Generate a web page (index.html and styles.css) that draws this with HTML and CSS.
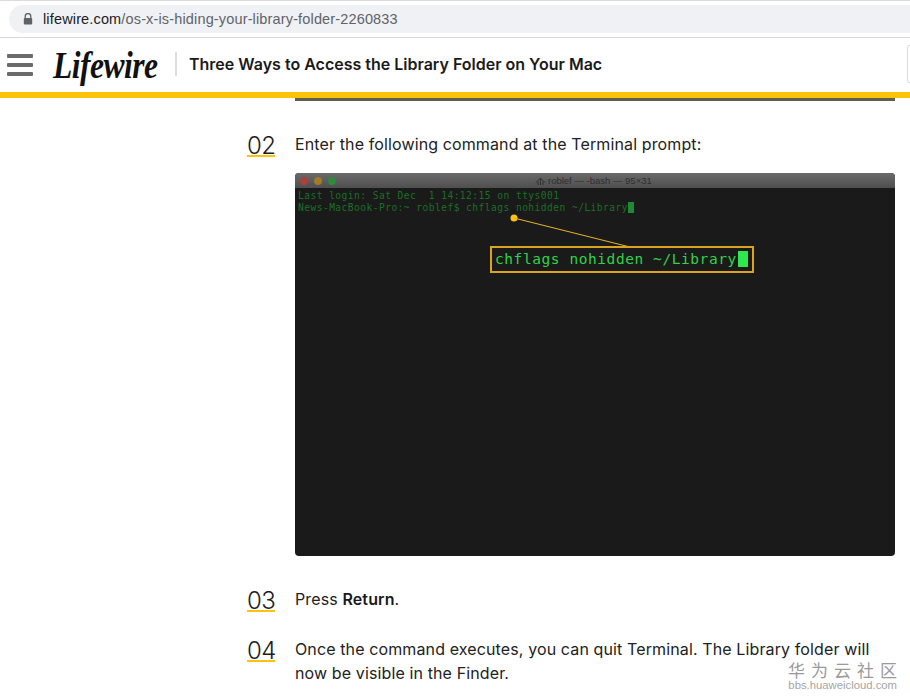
FILE: index.html
```html
<!DOCTYPE html>
<html lang="en">
<head>
<meta charset="utf-8">
<title>Three Ways to Access the Library Folder on Your Mac</title>
<link rel="stylesheet" href="styles.css">
</head>
<body>
<div class="chrome">
  <div class="address">
    <svg class="lock" width="10" height="12" viewBox="0 0 10 12"><path d="M2.2 5V3.4a2.8 2.8 0 0 1 5.6 0V5" fill="none" stroke="#5f6368" stroke-width="1.3"/><rect x="0.8" y="5" width="8.4" height="6.4" rx="1" fill="#5f6368"/></svg>
    <span class="url"><span class="host">lifewire.com</span>/os-x-is-hiding-your-library-folder-2260833</span>
  </div>
</div>
<header class="site">
  <div class="burger"><i></i><i></i><i></i></div>
  <div class="logo"><span class="logo-word">Lifewire</span></div>
  <div class="title">Three Ways to Access the Library Folder on Your Mac</div>
  <div class="search-edge"></div>
</header>
<div class="rule"></div>
<main class="article">
  <div class="prev-strip"></div>
  <section class="step step-02">
    <div class="num">02</div>
    <div class="body">
      <p>Enter the following command at the Terminal prompt:</p>
      <figure class="terminal">
        <div class="term-bar">
          <span class="dot red"></span><span class="dot amber"></span><span class="dot green"></span>
          <svg class="term-icon" width="11" height="9" viewBox="0 0 11 9"><path d="M1 5.5L5.5 1L10 5.5M3 4.5V8M8 4.5V8M5.5 2V8" fill="none" stroke="#2e2e2e" stroke-width="1"/></svg>
          <span class="term-title">roblef — -bash — 95×31</span>
        </div>
        <pre class="term-text">Last login: Sat Dec  1 14:12:15 on ttys001
News-MacBook-Pro:~ roblef$ chflags nohidden ~/Library<b class="cursor"></b></pre>
        <svg class="leader" width="130" height="40" viewBox="0 0 130 40"><circle cx="4" cy="4" r="3.5" fill="#fdc20f"/><path d="M4 4L120 33" stroke="#e8b52a" stroke-width="1"/></svg>
        <div class="callout">chflags nohidden ~/Library<b class="cursor big"></b></div>
      </figure>
    </div>
  </section>
  <section class="step step-03">
    <div class="num">03</div>
    <div class="body"><p>Press <strong>Return</strong>.</p></div>
  </section>
  <section class="step step-04">
    <div class="num">04</div>
    <div class="body"><p>Once the command executes, you can quit Terminal. The Library folder will now be visible in the Finder.</p></div>
  </section>
</main>
<div class="watermark">
  <div class="wm-cn">华为云社区</div>
  <div class="wm-en">bbs.huaweicloud.com</div>
</div>
</body>
</html>
```

FILE: styles.css
```css
* { box-sizing: border-box; }
html, body { margin: 0; padding: 0; }
body {
  width: 910px;
  height: 700px;
  overflow: hidden;
  background: #fff;
  color: #1c1c1c;
  font-family: Inter, "Liberation Sans", sans-serif;
  position: relative;
}
.chrome {
  height: 38px;
  padding: 5px 0 4px 9px;
  border-top: 1px solid #dcdcdc;
  border-bottom: 1px solid #d8d8d8;
  background: #fff;
}
.address {
  height: 28px;
  margin-top: -1px;
  background: #f0f1f4;
  border-radius: 14px 0 0 14px;
  display: flex;
  align-items: center;
  padding-left: 14px;
  gap: 10px;
}
.url {
  font-family: "Liberation Sans", Arial, sans-serif;
  font-size: 14.5px;
  letter-spacing: 0.15px;
  color: #5f6368;
  white-space: nowrap;
}
.host { color: #202124; }
.site {
  height: 54px;
  display: flex;
  align-items: center;
  background: #fff;
  padding-left: 7px;
  position: relative;
}
.burger { width: 26px; display: flex; flex-direction: column; gap: 5px; }
.burger i { display: block; height: 4px; background: #6b6b6b; border-radius: 1px; }
.logo {
  margin-left: 20px;
  width: 107px;
  font-family: "Liberation Serif", serif;
  font-style: italic;
  font-weight: 700;
  font-size: 38px;
  line-height: 40px;
  letter-spacing: -0.6px;
  color: #111;
  white-space: nowrap;
}
.logo-word { display: inline-block; transform: scaleX(0.83); transform-origin: left center; }
.title {
  margin-left: 15px;
  margin-bottom: 2px;
  padding-left: 12px;
  border-left: 2px solid #ddd;
  font-size: 16px;
  line-height: 24px;
  font-weight: 600;
  color: #1a1a1a;
  white-space: nowrap;
}
.search-edge {
  position: absolute;
  right: 0;
  top: 7px;
  width: 3px;
  height: 38px;
  border: 1px solid #ddd;
  border-right: 0;
  border-radius: 3px 0 0 3px;
}
.rule { height: 6px; background: #fdc20a; }
.article { padding-left: 247px; padding-right: 15px; }
.prev-strip { height: 3px; margin-left: 48px; background: #5f5f50; }
.step { display: flex; }
.step-02 { margin-top: 31px; }
.step-03 { margin-top: 31px; }
.step-04 { margin-top: 25px; }
.num {
  width: 28px;
  height: 25px;
  margin-right: 20px;
  flex: none;
  font-size: 24px;
  line-height: 28px;
  font-weight: 300;
  letter-spacing: -0.5px;
  color: #1c1c1c;
  background: linear-gradient(#fdc20a, #fdc20a) 0 23px / 28px 3px no-repeat;
}
.body { width: 600px; }
.body p {
  margin: 0;
  font-size: 16px;
  line-height: 24px;
  letter-spacing: 0.12px;
  color: #222;
}
.body strong { font-weight: 600; color: #1a1a1a; }
.terminal {
  position: relative;
  margin: 17px 0 0;
  height: 383px;
  background: #1a1a1a;
  border-radius: 4px;
  overflow: hidden;
}
.term-bar {
  height: 15px;
  background: linear-gradient(#6a6a6a, #4f4f4f);
  display: flex;
  align-items: center;
  padding-left: 5px;
  gap: 6px;
  position: relative;
}
.dot { width: 8px; height: 8px; border-radius: 50%; }
.red { background: #a8403c; }
.amber { background: #a5782a; }
.green { background: #2f8a3c; }
.term-icon { position: absolute; left: 240px; top: 4px; }
.term-title {
  position: absolute;
  left: 253px;
  top: 1px;
  font-family: "Liberation Sans", sans-serif;
  font-size: 9.5px;
  line-height: 13px;
  color: #2e2e2e;
}
.term-text {
  margin: 0;
  padding: 2px 0 0 3px;
  font-family: "DejaVu Sans Mono", monospace;
  font-size: 9.6px;
  line-height: 11.5px;
  letter-spacing: 0.45px;
  color: #1a6f27;
}
.cursor { display: inline-block; width: 6px; height: 11px; background: #1f8a36; vertical-align: -2px; }
.leader { position: absolute; left: 215px; top: 41px; }
.callout {
  position: absolute;
  left: 195px;
  top: 73px;
  width: 264px;
  height: 27px;
  border: 2px solid #d9a520;
  padding-left: 3px;
  font-family: "DejaVu Sans Mono", monospace;
  font-size: 14.5px;
  line-height: 23px;
  letter-spacing: 0.57px;
  color: #34d04a;
  white-space: nowrap;
}
.cursor.big { width: 10px; height: 16px; background: #2fe84e; margin-left: 1px; vertical-align: -3px; }
.watermark {
  position: absolute;
  right: 13px;
  top: 660px;
  text-align: right;
  color: #9a9a9a;
}
.wm-cn {
  font-family: "Noto Sans CJK SC", sans-serif;
  font-size: 17px;
  line-height: 19px;
  letter-spacing: 6px;
  margin-right: -6px;
}
.wm-en {
  font-family: "Liberation Sans", sans-serif;
  font-size: 11.3px;
  line-height: 13px;
  color: #a5a5a5;
}
```
